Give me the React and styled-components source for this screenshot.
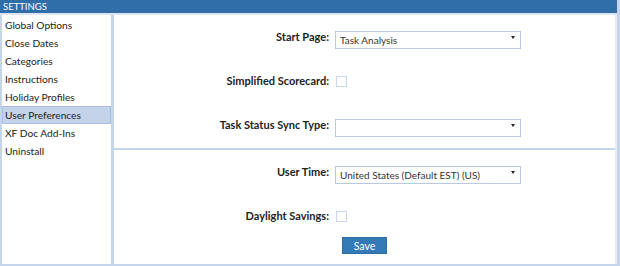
import React, { useState } from 'react';
import styled, { createGlobalStyle } from 'styled-components';

const GlobalStyle = createGlobalStyle`
  html, body {
    margin: 0;
    padding: 0;
    background: #fff;
  }
  body {
    font-family: "Segoe UI", Lato, "Open Sans", sans-serif;
  }
`;

const menuItems = [
  'Global Options',
  'Close Dates',
  'Categories',
  'Instructions',
  'Holiday Profiles',
  'User Preferences',
  'XF Doc Add-Ins',
  'Uninstall',
];

const App = () => {
  const [active, setActive] = useState('User Preferences');
  const [startPage, setStartPage] = useState('Task Analysis');
  const [syncType, setSyncType] = useState('');
  const [userTime, setUserTime] = useState('US');

  return (
    <>
      <GlobalStyle />
      <Frame>
        <Header>SETTINGS</Header>
        <Body>
          <Sidebar>
            {menuItems.map((item) => (
              <MenuItem
                key={item}
                $active={item === active}
                onClick={() => setActive(item)}
              >
                {item}
              </MenuItem>
            ))}
          </Sidebar>
          <Content>
            <Section>
              <Row>
                <Label>Start Page:</Label>
                <SelectWrap>
                  <Select value={startPage} onChange={(e) => setStartPage(e.target.value)}>
                    <option>Task Analysis</option>
                    <option>Scorecard</option>
                  </Select>
                  <Caret />
                </SelectWrap>
              </Row>
              <Row>
                <Label>Simplified Scorecard:</Label>
                <Check type="checkbox" />
              </Row>
              <Row>
                <Label>Task Status Sync Type:</Label>
                <SelectWrap>
                  <Select value={syncType} onChange={(e) => setSyncType(e.target.value)}>
                    <option value=""></option>
                    <option value="auto">Automatic</option>
                  </Select>
                  <Caret />
                </SelectWrap>
              </Row>
            </Section>
            <Separator />
            <Section>
              <Row>
                <Label>User Time:</Label>
                <SelectWrap>
                  <Select value={userTime} onChange={(e) => setUserTime(e.target.value)}>
                    <option value="US">United States (Default EST) (US)</option>
                  </Select>
                  <Caret />
                </SelectWrap>
              </Row>
              <Row>
                <Label>Daylight Savings:</Label>
                <Check type="checkbox" />
              </Row>
            </Section>
            <ButtonRow>
              <SaveButton>Save</SaveButton>
            </ButtonRow>
          </Content>
        </Body>
      </Frame>
    </>
  );
};

const Frame = styled.div`
  width: 620px;
  height: 266px;
  box-sizing: border-box;
  display: flex;
  flex-direction: column;
  border-right: 3px solid #c5d5ec;
  border-bottom: 2px solid #c5d5ec;
  background: #fff;
`;

const Header = styled.div`
  height: 13px;
  line-height: 13px;
  background: #2f6ea9;
  color: #fff;
  font-size: 9.5px;
  padding-left: 3px;
  border-bottom: 2px solid #dbe5f3;
`;

const Body = styled.div`
  flex: 1;
  display: flex;
  min-height: 0;
`;

const Sidebar = styled.div`
  width: 109px;
  border-left: 2px solid #c5d5ec;
  border-right: 3px solid #c5d5ec;
  padding-top: 1px;
  display: flex;
  flex-direction: column;
`;

const MenuItem = styled.div`
  height: 18px;
  line-height: 17px;
  box-sizing: border-box;
  padding-left: 2px;
  font-size: 10.2px;
  color: #222;
  cursor: pointer;
  background: ${(p) => (p.$active ? '#c4d3ea' : 'transparent')};
  border: 1px solid ${(p) => (p.$active ? '#a9bedf' : 'transparent')};
`;

const Content = styled.div`
  flex: 1;
  display: flex;
  flex-direction: column;
  border-right: 2px solid #e4ebf5;
`;

const Section = styled.div`
  display: flex;
  flex-direction: column;
`;

const Row = styled.div`
  height: 44px;
  display: grid;
  grid-template-columns: 215px auto;
  column-gap: 6px;
  align-items: center;
`;

const Label = styled.label`
  text-align: right;
  font-size: 11px;
  font-weight: bold;
  line-height: 14px;
  color: #222;
`;

const SelectWrap = styled.div`
  position: relative;
  width: 186px;
  height: 18px;
`;

const Select = styled.select`
  appearance: none;
  -webkit-appearance: none;
  width: 100%;
  height: 100%;
  box-sizing: border-box;
  border: 1px solid #b7c9e3;
  border-radius: 0;
  background: #fff;
  font-family: inherit;
  font-size: 10px;
  color: #333;
  padding: 0 14px 0 4px;
  outline: none;
`;

const Caret = styled.span`
  position: absolute;
  right: 6px;
  top: 8px;
  width: 0;
  height: 0;
  border-left: 2.5px solid transparent;
  border-right: 2.5px solid transparent;
  border-top: 3px solid #222;
  pointer-events: none;
`;

const Check = styled.input`
  appearance: none;
  -webkit-appearance: none;
  width: 11px;
  height: 11px;
  margin: 0 0 0 1px;
  box-sizing: border-box;
  border: 1px solid #c9d6ea;
  background: #fff;

  &:checked {
    background: #337ab7;
  }
`;

const Separator = styled.div`
  height: 2px;
  background: #c5d5ec;
  margin-top: 1px;
`;

const ButtonRow = styled.div`
  display: flex;
  justify-content: center;
  margin-top: -1px;
`;

const SaveButton = styled.button`
  width: 45px;
  height: 17px;
  padding: 0;
  background: #337ab7;
  color: #fff;
  border: 1px solid #2e6da4;
  border-radius: 0;
  font-family: inherit;
  font-size: 10.5px;
  cursor: pointer;
`;

export default App;
